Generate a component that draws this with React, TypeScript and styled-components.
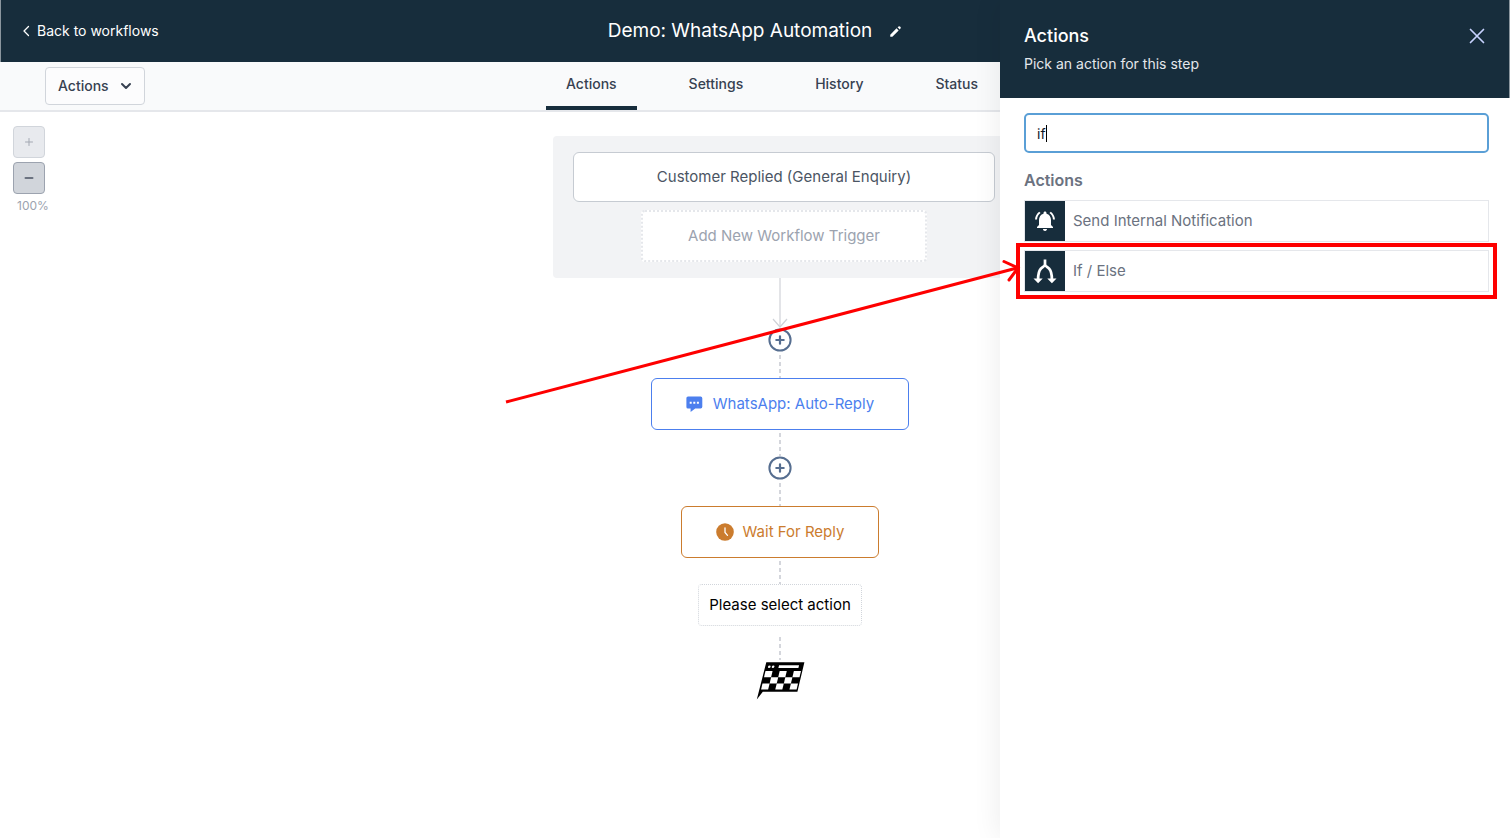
import React, { useState } from "react";
import styled, { createGlobalStyle } from "styled-components";
import { HiPencil } from "react-icons/hi";
import { MdNotificationsActive } from "react-icons/md";

const navy = "#172d3c";

const GlobalStyle = createGlobalStyle`
  *, *::before, *::after { box-sizing: border-box; }
  body {
    margin: 0;
    background: #fff;
    font-family: Inter, "Liberation Sans", sans-serif;
    font-size: 15px;
    line-height: 24px;
    color: #374151;
  }
  button, input { font: inherit; color: inherit; }
  button { cursor: pointer; padding: 0; }
  svg { display: block; flex: none; }
  h1, h2, h3, p, ul { margin: 0; padding: 0; }
`;

const Page = styled.div`
  position: relative;
  min-height: 100vh;
  overflow: hidden;
`;

const Header = styled.header`
  display: grid;
  grid-template-columns: 1fr auto 1fr;
  align-items: center;
  height: 62px;
  padding: 0 20px;
  background: ${navy};
  border-left: 1px solid #8b969e;
  color: #fff;
`;

const BackLink = styled.a`
  display: flex;
  align-items: center;
  gap: 4px;
  justify-self: start;
  font-size: 14px;
  line-height: 20px;
  font-weight: 400;
  color: #fff;
  text-decoration: none;
`;

const TitleGroup = styled.div`
  display: flex;
  align-items: center;
  gap: 16px;
`;

const Title = styled.h1`
  font-size: 19px;
  line-height: 28px;
  font-weight: 400;
`;

const IconButton = styled.button<{ $color: string }>`
  display: flex;
  padding: 6px 0;
  border: 0;
  background: none;
  color: ${(p) => p.$color};
`;

const Toolbar = styled.div`
  display: grid;
  grid-template-columns: 1fr auto 1fr;
  align-items: start;
  height: 50px;
  padding: 0 11px 0 45px;
  background: #f9fafb;
  border-bottom: 2px solid #e5e7eb;
`;

const MenuButton = styled.button`
  display: flex;
  align-items: center;
  justify-self: start;
  gap: 11px;
  height: 38px;
  margin-top: 5px;
  padding: 0 12px;
  border: 1px solid #d1d5db;
  border-radius: 4px;
  background: #fcfcfd;
  font-size: 14px;
  line-height: 20px;
  font-weight: 500;
`;

const Tabs = styled.nav`
  display: flex;
  gap: 32px;
`;

const Tab = styled.a<{ $active?: boolean }>`
  height: 48px;
  padding: 12px 20px 0;
  border-bottom: 4px solid ${(p) => (p.$active ? navy : "transparent")};
  font-size: 14px;
  line-height: 20px;
  font-weight: 500;
  color: #374151;
  text-decoration: none;
`;

const Workspace = styled.main`
  display: flex;
`;

const ZoomControls = styled.div`
  display: flex;
  flex-direction: column;
  gap: 4px;
  width: 50px;
  padding: 14px 0 0 13px;
`;

const ZoomButton = styled.button<{ $pressed?: boolean }>`
  display: flex;
  align-items: center;
  justify-content: center;
  width: 32px;
  height: 32px;
  border: 1px solid ${(p) => (p.$pressed ? "#9ca3af" : "#d1d5db")};
  border-radius: 4px;
  background: ${(p) => (p.$pressed ? "#d1d5db" : "#e8eaee")};
  color: ${(p) => (p.$pressed ? "#6b7280" : "#a3a8b2")};
`;

const ZoomLevel = styled.span`
  padding-left: 4px;
  font-size: 12px;
  line-height: 16px;
  color: #9ca3af;
`;

const Flow = styled.div`
  flex: 1;
  display: flex;
  flex-direction: column;
  align-items: center;
  padding: 24px 0;
`;

const Triggers = styled.section`
  display: flex;
  flex-direction: column;
  align-items: center;
  gap: 8px;
  width: 454px;
  padding: 16px 12px 16px 20px;
  border-radius: 4px;
  background: #f2f3f5;
`;

const TriggerCard = styled.button`
  width: 100%;
  height: 50px;
  border: 1px solid #c6cbd2;
  border-radius: 6px;
  background: #fff;
  color: #4b5563;
`;

const AddTrigger = styled.button`
  width: 286px;
  height: 52px;
  border: 2px dotted #e5e7eb;
  border-radius: 4px;
  background: #fff;
  color: #9ca3af;
`;

const Dashes = styled.div`
  width: 2px;
  height: 26px;
  background: repeating-linear-gradient(transparent 0 3px, #d4d6dc 3px 7px);
`;

const AddStep = styled.button`
  display: flex;
  border: 0;
  border-radius: 50%;
  background: #fff;
  color: #566e90;
`;

const StepCard = styled.button<{ $color: string }>`
  display: flex;
  align-items: center;
  gap: 9px;
  height: 52px;
  padding: 0 34px;
  border: 1px solid ${(p) => p.$color};
  border-radius: 6px;
  background: #fff;
  color: ${(p) => p.$color};
`;

const PendingStep = styled.div`
  height: 42px;
  margin-bottom: 8px;
  padding: 8px 10px;
  border: 1px dotted #d1d5db;
  border-radius: 4px;
  color: #000;
`;

const Drawer = styled.aside`
  position: absolute;
  top: 0;
  right: 0;
  bottom: 0;
  width: 510px;
  background: #fff;
  box-shadow: -2px 0 26px rgba(0, 0, 0, 0.07);
`;

const DrawerHeader = styled.div`
  display: flex;
  justify-content: space-between;
  align-items: flex-start;
  height: 98px;
  padding: 22px 24px 0 24px;
  border-right: 1px solid #8b969e;
  background: ${navy};
`;

const DrawerTitle = styled.h2`
  font-size: 18px;
  line-height: 28px;
  font-weight: 500;
  color: #fff;
`;

const DrawerHint = styled.p`
  margin-top: 4px;
  font-size: 14px;
  line-height: 20px;
  color: #e4e7eb;
`;

const DrawerBody = styled.div`
  padding: 15px 21px 0 24px;
`;

const SearchField = styled.label`
  position: relative;
  display: block;
`;

const SearchInput = styled.input`
  display: block;
  width: 100%;
  height: 40px;
  padding: 0 11px;
  border: 2px solid #5a9fd6;
  border-radius: 5px;
  outline: none;
  background: #fff;
  font-size: 14px;
  color: #111827;
  caret-color: transparent;
`;

const Caret = styled.span`
  position: absolute;
  top: 12px;
  left: 22px;
  width: 1px;
  height: 17px;
  background: #000;
`;

const GroupTitle = styled.h3`
  margin: 15px 0 8px;
  font-size: 16px;
  line-height: 24px;
  font-weight: 600;
  color: #6b7280;
`;

const ActionList = styled.ul`
  display: flex;
  flex-direction: column;
  gap: 8px;
  list-style: none;
`;

const ActionItem = styled.li`
  position: relative;
`;

const ActionButton = styled.button`
  display: flex;
  align-items: center;
  gap: 8px;
  width: 100%;
  border: 1px solid #e5e7eb;
  background: #fff;
  color: #6b7280;
`;

const ActionIcon = styled.span`
  display: flex;
  align-items: center;
  justify-content: center;
  width: 40px;
  height: 40px;
  background: ${navy};
  color: #fff;
`;

const Highlight = styled.div`
  position: absolute;
  inset: -7px -8px;
  border: 4px solid #fe0000;
  pointer-events: none;
`;

const Pointer = styled.svg`
  position: absolute;
  top: 6px;
  left: -524px;
  pointer-events: none;
`;

type StrokeProps = { d: string; size: number; width?: number };

const Stroke = ({ d, size, width = 2 }: StrokeProps) => (
  <svg
    width={size}
    height={size}
    viewBox={`0 0 ${size} ${size}`}
    fill="none"
    stroke="currentColor"
    strokeWidth={width}
    strokeLinecap="round"
    strokeLinejoin="round"
    aria-hidden="true"
  >
    <path d={d} />
  </svg>
);

const DownArrow = () => (
  <svg width="16" height="50" viewBox="0 0 16 50" fill="none" aria-hidden="true">
    <path d="M8 0V49" stroke="#dcdee2" strokeWidth="1.6" />
    <path d="M1 41l7 8 7-8" stroke="#cfd2d8" strokeWidth="1.2" />
  </svg>
);

const PlusCircle = () => (
  <svg width="24" height="24" viewBox="0 0 24 24" fill="none" stroke="currentColor" strokeWidth="2" strokeLinecap="round" aria-hidden="true">
    <circle cx="12" cy="12" r="10.6" />
    <path d="M12 8.300v7.400M8.300 12h7.400" strokeWidth="2.200" />
  </svg>
);

const ChatIcon = () => (
  <svg width="18" height="18" viewBox="0 0 18 18" aria-hidden="true">
    <path fill="currentColor" d="M2 1.500h12.600a1.700 1.700 0 0 1 1.700 1.700v8.600a1.700 1.700 0 0 1-1.700 1.700H9.200L4.600 17v-3.500H2a1.600 1.600 0 0 1-1.600-1.600V3.100A1.600 1.600 0 0 1 2 1.500z" />
    <path fill="#fff" d="M3.700 6.700h2v2h-2zM7.300 6.700h2v2h-2zM10.900 6.700h2v2h-2z" />
  </svg>
);

const ClockIcon = () => (
  <svg width="18" height="18" viewBox="0 0 18 18" fill="none" aria-hidden="true">
    <circle cx="9" cy="9" r="8.800" fill="currentColor" />
    <path d="M9 4.800V9.400L11.500 12.300" stroke="#fff" strokeWidth="1.300" strokeLinecap="round" />
  </svg>
);

const SplitIcon = () => (
  <svg width="24" height="26" viewBox="0 0 24 26" fill="none" aria-hidden="true">
    <path
      d="M12 1.500V7.500M12 6.500C11.500 8.500 9.500 9 7.800 10.800C5.800 13 5.100 15.500 5.100 21.500M12 6.500C12.500 8.500 14.500 9 16.200 10.800C18.200 13 18.900 15.500 18.900 21.500"
      stroke="currentColor"
      strokeWidth="2.700"
    />
    <path d="M.5 20.600H9.700L5.100 25.200zM14.300 20.600H23.500L18.900 25.200z" fill="currentColor" />
  </svg>
);

const checkers = [
  [0, 0], [2, 0], [4, 0],
  [1, 1], [3, 1],
  [0, 2], [2, 2], [4, 2],
];

const FinishFlag = () => (
  <svg width="49" height="40" viewBox="0 0 49 40" aria-hidden="true">
    <path d="M10.300 2.200H48.400L41.400 31.700H6.800L.8 39.500z" fill="#000" />
    <g transform="skewX(-13.400)" fill="#fff">
      <rect x="24.300" y="5.200" width="20" height="2.900" />
      <circle cx="14.900" cy="6.700" r="1.300" />
      <circle cx="18.700" cy="6.700" r="1.300" />
      {checkers.map(([col, row]) => (
        <rect key={`${col}-${row}`} x={12.1 + col * 7.1} y={11 + row * 6.2} width="7.100" height="6.200" />
      ))}
    </g>
  </svg>
);

const tabs = ["Actions", "Settings", "History", "Status"];

export default function App() {
  const [query, setQuery] = useState("if");

  return (
    <>
      <GlobalStyle />
      <Page>
        <Header>
          <BackLink href="#">
            <Stroke size={12} width={1.3} d="M7.500 1.500L3 6l4.500 4.500" />
            Back to workflows
          </BackLink>
          <TitleGroup>
            <Title>Demo: WhatsApp Automation</Title>
            <IconButton $color="#fff" aria-label="Rename workflow">
              <HiPencil size={15} />
            </IconButton>
          </TitleGroup>
        </Header>

        <Toolbar>
          <MenuButton>
            Actions
            <Stroke size={12} d="M2 4l4 4 4-4" />
          </MenuButton>
          <Tabs>
            {tabs.map((tab, i) => (
              <Tab key={tab} href="#" $active={i === 0}>{tab}</Tab>
            ))}
          </Tabs>
        </Toolbar>

        <Workspace>
          <ZoomControls>
            <ZoomButton aria-label="Zoom in">
              <Stroke size={8} width={1} d="M4 0.500v7M0.500 4h7" />
            </ZoomButton>
            <ZoomButton $pressed aria-label="Zoom out">
              <Stroke size={10} d="M1.500 5h7" />
            </ZoomButton>
            <ZoomLevel>100%</ZoomLevel>
          </ZoomControls>

          <Flow>
            <Triggers>
              <TriggerCard>Customer Replied (General Enquiry)</TriggerCard>
              <AddTrigger>Add New Workflow Trigger</AddTrigger>
            </Triggers>
            <DownArrow />
            <AddStep aria-label="Add step"><PlusCircle /></AddStep>
            <Dashes />
            <StepCard $color="#4c7fee">
              <ChatIcon />
              WhatsApp: Auto-Reply
            </StepCard>
            <Dashes />
            <AddStep aria-label="Add step"><PlusCircle /></AddStep>
            <Dashes />
            <StepCard $color="#cb7c2e">
              <ClockIcon />
              Wait For Reply
            </StepCard>
            <Dashes />
            <PendingStep>Please select action</PendingStep>
            <Dashes />
            <FinishFlag />
          </Flow>
        </Workspace>

        <Drawer>
          <DrawerHeader>
            <div>
              <DrawerTitle>Actions</DrawerTitle>
              <DrawerHint>Pick an action for this step</DrawerHint>
            </div>
            <IconButton $color="#c7d2fe" aria-label="Close">
              <Stroke size={16} width={1.7} d="M1.500 1.500l13 13M14.500 1.500l-13 13" />
            </IconButton>
          </DrawerHeader>
          <DrawerBody>
            <SearchField>
              <SearchInput aria-label="Search actions" value={query} onChange={(e) => setQuery(e.target.value)} />
              <Caret />
            </SearchField>
            <GroupTitle>Actions</GroupTitle>
            <ActionList>
              <ActionItem>
                <ActionButton>
                  <ActionIcon><MdNotificationsActive size={24} /></ActionIcon>
                  Send Internal Notification
                </ActionButton>
              </ActionItem>
              <ActionItem>
                <ActionButton>
                  <ActionIcon><SplitIcon /></ActionIcon>
                  If / Else
                </ActionButton>
                <Highlight />
                <Pointer width="522" height="150" viewBox="0 0 522 150" fill="none" stroke="#fe0000" strokeWidth="3" aria-hidden="true">
                  <path d="M6 146L517 12" />
                  <path d="M504 5.500L518 12L509 24" strokeLinecap="round" />
                </Pointer>
              </ActionItem>
            </ActionList>
          </DrawerBody>
        </Drawer>
      </Page>
    </>
  );
}
